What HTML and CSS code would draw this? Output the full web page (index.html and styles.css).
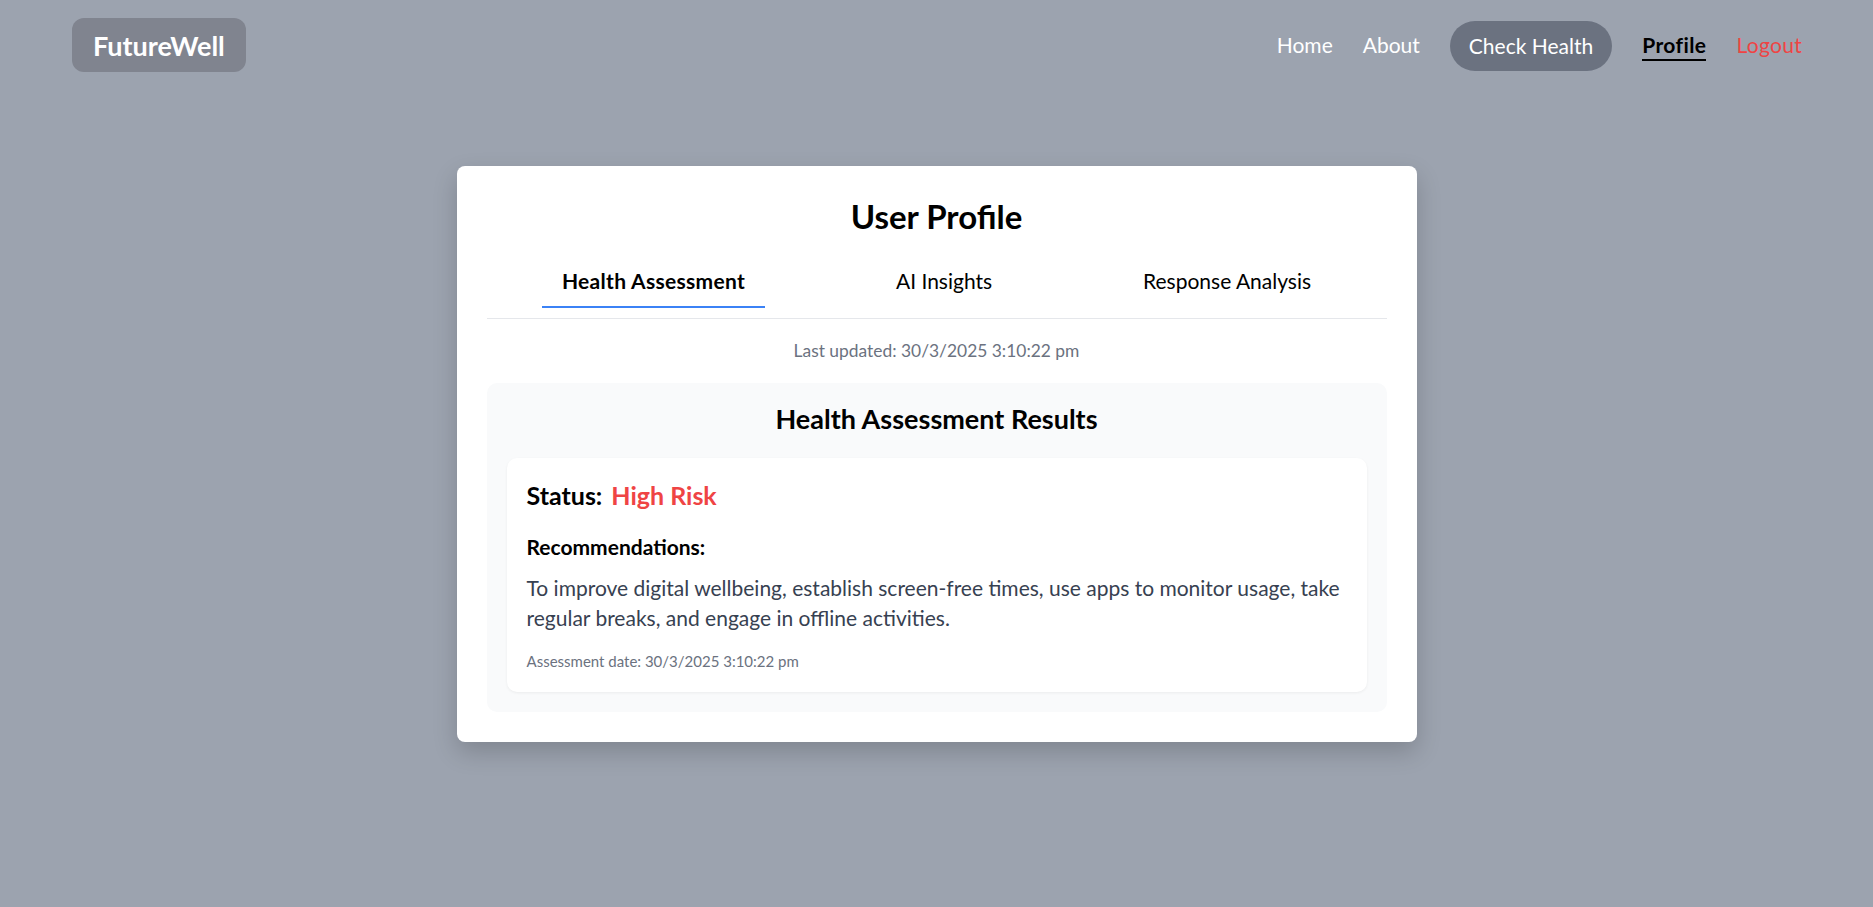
FILE: index.html
```html
<!DOCTYPE html>
<html lang="en">
<head>
<meta charset="utf-8">
<title>FutureWell - Profile</title>
<link rel="stylesheet" href="styles.css">
</head>
<body>
<header class="navbar">
  <div class="logo">FutureWell</div>
  <nav class="nav">
    <a class="nav-link" href="#">Home</a>
    <a class="nav-link" href="#">About</a>
    <a class="nav-btn" href="#">Check Health</a>
    <a class="nav-link active" href="#">Profile</a>
    <a class="nav-link logout" href="#">Logout</a>
  </nav>
</header>
<main class="card">
  <h1 class="title">User Profile</h1>
  <div class="tabs">
    <button class="tab active">Health Assessment</button>
    <button class="tab">AI Insights</button>
    <button class="tab">Response Analysis</button>
  </div>
  <p class="updated">Last updated: 30/3/2025 3:10:22 pm</p>
  <section class="results">
    <h2 class="results-title">Health Assessment Results</h2>
    <div class="result-card">
      <div class="status"><span class="status-label">Status:</span><span class="status-value">High Risk</span></div>
      <h3 class="rec-title">Recommendations:</h3>
      <p class="rec-text">To improve digital wellbeing, establish screen-free times, use apps to monitor usage, take regular breaks, and engage in offline activities.</p>
      <p class="date">Assessment date: 30/3/2025 3:10:22 pm</p>
    </div>
  </section>
</main>
</body>
</html>
```
FILE: styles.css
```css
* { box-sizing: border-box; }
body {
  margin: 0;
  background: #9ca3af;
  font-family: Lato, "Open Sans", sans-serif;
  color: #000;
  min-height: 100vh;
}
.navbar {
  display: flex;
  align-items: center;
  justify-content: space-between;
  padding: 18px 71px 18px 72px;
}
.logo {
  height: 54px;
  display: flex;
  align-items: center;
  padding: 0 21px;
  background: #80848f;
  border-radius: 12px;
  color: #fff;
  font-weight: 700;
  font-size: 27px;
}
.nav {
  display: flex;
  align-items: center;
  gap: 30px;
}
.nav-link {
  color: #fff;
  text-decoration: none;
  font-size: 21px;
  line-height: 28px;
}
.nav-link.active {
  color: #000;
  font-weight: 700;
  letter-spacing: 0.4px;
  border-bottom: 2px solid #000;
  margin-top: 2px;
}
.nav-link.logout { color: #ef4444; letter-spacing: 0.3px; }
.nav-btn {
  background: #6b7280;
  color: #fff;
  text-decoration: none;
  font-size: 21px;
  line-height: 30px;
  padding: 10px 19px;
  border-radius: 25px;
  margin-top: 2px;
}
.card {
  width: 960px;
  margin: 76px auto 0;
  background: #fff;
  border-radius: 8px;
  padding: 30px;
  box-shadow: 0 10px 25px rgba(0, 0, 0, 0.18);
}
.title {
  margin: 0 0 19px;
  text-align: center;
  font-size: 33px;
  line-height: 40px;
  font-weight: 700;
}
.tabs {
  display: flex;
  justify-content: space-around;
  border-bottom: 1px solid #e5e7eb;
  padding-bottom: 10px;
}
.tab {
  background: none;
  border: none;
  border-bottom: 2px solid transparent;
  padding: 12px 20px;
  font-family: inherit;
  font-size: 21px;
  line-height: 27px;
  color: #000;
  cursor: pointer;
}
.tab.active {
  font-weight: 700;
  letter-spacing: 0.3px;
  border-bottom-color: #3b82f6;
}
.updated {
  margin: 20px 0 20px;
  text-align: center;
  color: #6b7280;
  font-size: 17.4px;
  line-height: 24px;
}
.results {
  background: #f9fafb;
  border-radius: 10px;
  padding: 20px;
}
.results-title {
  margin: 0 0 24px;
  text-align: center;
  font-size: 27px;
  line-height: 31px;
  font-weight: 700;
}
.result-card {
  background: #fff;
  border-radius: 10px;
  padding: 20px;
  box-shadow: 0 1px 3px rgba(0, 0, 0, 0.06);
}
.status {
  display: flex;
  align-items: baseline;
  gap: 9px;
  font-size: 25px;
  line-height: 34px;
  font-weight: 700;
}
.status-value { color: #ef4444; }
.rec-title {
  margin: 21px 0 12px;
  font-size: 21px;
  line-height: 28px;
  font-weight: 700;
}
.rec-text {
  margin: 0;
  color: #374151;
  font-size: 21px;
  line-height: 30px;
}
.date {
  margin: 17px 0 0;
  color: #6b7280;
  font-size: 15px;
  line-height: 22px;
}
```
